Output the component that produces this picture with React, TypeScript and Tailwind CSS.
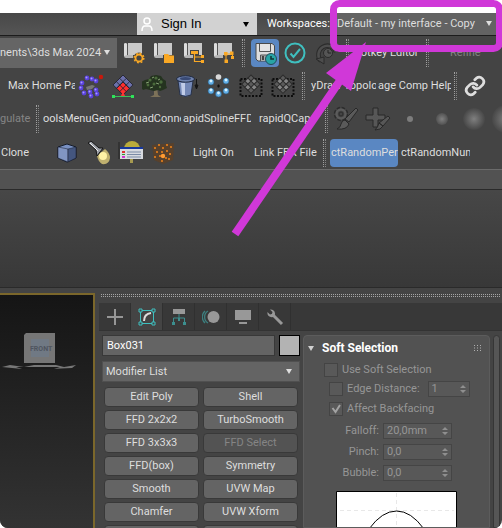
import type { ReactNode } from "react";

const ORANGE = "#f9a825";
const TEAL = "#3fbfbf";

const Separator = () => (
  <div className="flex h-7 w-2 shrink-0 justify-center gap-px">
    <div className="border-l border-dotted border-[#a0a0a0]" />
    <div className="border-l border-dotted border-[#858585]" />
  </div>
);

interface ToolProps {
  label: string;
  className?: string;
  children: ReactNode;
}

const Tool = ({ label, className = "w-8", children }: ToolProps) => (
  <button aria-label={label} className={`flex h-7 shrink-0 items-center justify-center ${className}`}>
    {children}
  </button>
);

interface TextToolProps {
  text: string;
  className: string;
}

const TextTool = ({ text, className }: TextToolProps) => (
  <button className={`h-7 shrink-0 overflow-hidden whitespace-nowrap text-left ${className}`}>{text}</button>
);

const Caret = ({ className = "" }: { className?: string }) => (
  <svg className={`pointer-events-none ${className}`} width="6" height="5" viewBox="0 0 6 5">
    <path d="M0 0h6L3 5z" fill="currentColor" />
  </svg>
);

const ScriptIcon = ({ children }: { children: ReactNode }) => (
  <svg width="22" height="22" viewBox="0 0 22 22">
    <path d="M5 1h14v12H5z" fill="#c9c9c9" />
    <path d="M1 2q0-1 1.500-1t1.500 1v12H1z" fill="#dcdcdc" />
    <path d="M1 14q0 2 2 2h7v-3H4.500z" fill="#b5b5b5" />
    <path d="M4.500 2v11" stroke="#555" />
    {children}
  </svg>
);

const GearScript = () => (
  <ScriptIcon>
    <circle cx="16" cy="16" r="5.500" fill="#444" />
    <circle cx="16" cy="16" r="3.500" fill="none" stroke={ORANGE} strokeWidth="1.800" />
    <circle cx="16" cy="16" r="4.800" fill="none" stroke={ORANGE} strokeWidth="1.500" strokeDasharray="1.900 1.870" />
  </ScriptIcon>
);

const FolderScript = () => (
  <ScriptIcon>
    <path d="M11 12h4l1.500 1.500H21V21H11z" fill={ORANGE} />
  </ScriptIcon>
);

const TreeScript = () => (
  <ScriptIcon>
    <path d="M7 8h9v5H7z" fill="#444" />
    <path d="M8 9h7v3H8zM18 13h3v3h-3zM18 18h3v3h-3z" fill={ORANGE} />
    <path d="M11.500 12v7.500H18M11.500 15H18" fill="none" stroke={ORANGE} strokeWidth="1.200" />
  </ScriptIcon>
);

const NodesScript = () => (
  <ScriptIcon>
    <path d="M11 10h3.500v3.500H11zM17 9.500h3.500V13H17zM11.500 17.500H15V21h-3.500zM18 14h3v3h-3z" fill={ORANGE} />
    <path d="M13 12h6l1 3M13 12v7" fill="none" stroke={ORANGE} />
  </ScriptIcon>
);

const SaveIcon = () => (
  <svg width="24" height="24" viewBox="0 0 24 24">
    <path d="M3 2.500h16l2.500 2V20H5l-2-2z" fill="#ddd" stroke="#4a4a4a" />
    <path d="M6.500 3v7.500h11V3" fill="#e4e4e4" stroke="#555" />
    <path d="M7.500 20v-6h8v6" fill="#aaa" stroke="#555" />
    <path d="M9 15h2v4H9z" fill="#444" />
    <circle cx="18" cy="18" r="5.500" fill="#28a5a5" stroke="#254b5c" />
    <path d="M18 15v3h3" fill="none" stroke="#133" strokeWidth="1.500" />
  </svg>
);

const CheckIcon = () => (
  <svg width="22" height="22" viewBox="0 0 22 22" fill="none" stroke={TEAL} strokeWidth="2">
    <circle cx="11" cy="11" r="9.500" />
    <path d="M6.500 11.500l3 3.500 6.500-8" />
  </svg>
);

const HistoryIcon = () => (
  <svg width="24" height="24" viewBox="0 0 24 24" fill="none">
    <path d="M6 20a9 9 0 1 1 15-9" stroke="#2b2b2b" strokeWidth="4.500" />
    <path d="M6 20a9 9 0 1 1 15-9" stroke="#4d4d4d" strokeWidth="2.500" />
    <path d="M1 18l8-2v7z" fill="#4d4d4d" stroke="#2b2b2b" />
    <circle cx="13" cy="12" r="4.500" fill="#555" stroke="#2b2b2b" />
    <path d="M13 9v3h3" stroke="#222" />
  </svg>
);

const BALLS = [[4, 10], [9, 5], [14, 6], [18, 8], [3, 15], [6, 20], [12, 19], [18, 17], [13, 23], [19, 21]];

const BallsIcon = () => (
  <svg width="26" height="26" viewBox="0 0 26 26">
    <path d="M8 14l6-2 3 1-3 3-5 1z" fill="#777" />
    {BALLS.map(([x, y]) => (
      <g key={`${x}-${y}`}>
        <circle cx={x} cy={y} r="2.400" fill="#5a42dc" />
        <circle cx={x - 0.5} cy={y - 0.5} r="1" fill="#a99bff" />
      </g>
    ))}
    <circle cx="23" cy="4" r="2.200" fill="#c8190c" />
  </svg>
);

const CheckerIcon = () => (
  <svg width="24" height="24" viewBox="0 0 24 24">
    <g transform="translate(12 1) rotate(45)" stroke="#20202c" strokeWidth=".8">
      <path d="M0 0h14v14H0z" fill="#6c70aa" />
      <path d="M5 5h9v9H5z" fill="#ff2e2e" />
      <path d="M0 4.700h14M0 9.400h14M4.700 0v14M9.400 0v14" />
    </g>
    <path d="M2 22.500h20" stroke="#3bbf58" />
    <path d="M1 21h3v3H1zM20 21h3v3h-3z" fill="#2fe35a" />
    <path d="M12 17l2 5h-4z" fill="#f33" />
  </svg>
);

const TreeIcon = () => (
  <svg width="26" height="24" viewBox="0 0 26 24">
    <path d="M12 13h3l1 8 3 2H8l4-2z" fill="#7d7259" />
    <path d="M3 6l4-1 2-3 5-1 5 1 2 3 3 2v4l1 3-4 2-3 1-2-1-4 1-4-1-4-1-3 1-3-4 1-4z" fill="#24331f" />
    <g fill="#4a6a3b">
      <circle cx="8" cy="6" r="1.600" />
      <circle cx="14" cy="4" r="1.600" />
      <circle cx="19" cy="8" r="1.700" />
      <circle cx="6" cy="11" r="1.400" />
      <circle cx="12" cy="10" r="1.500" />
      <circle cx="18" cy="13" r="1.200" />
    </g>
    <path d="M10 4l2-1M16 6l2-1M4 9l3-1M14 9l3 1M8 14l3-1" stroke="#86a274" />
  </svg>
);

const BucketIcon = () => (
  <svg width="24" height="24" viewBox="0 0 24 24">
    <path d="M3 7h15l-2 14q-6 3-11 0z" fill="#7488b6" stroke="#273148" />
    <path d="M6 9l1 12h3V9z" fill="#c2cde8" />
    <ellipse cx="10.500" cy="5" rx="9" ry="3.200" fill="#6f82ad" stroke="#1f2940" />
    <ellipse cx="10.500" cy="4.500" rx="5.500" ry="1.500" fill="#394a75" />
    <path d="M21.500 5v8M20 11l1.500 4 1.500-4z" stroke="#161616" fill="#161616" />
  </svg>
);

const RING = [[5, 8], [20, 7], [5, 17], [20, 17], [12.5, 20]];

const RingIcon = () => (
  <svg width="26" height="26" viewBox="0 0 26 26">
    {RING.map(([x, y]) => (
      <g key={`${x}-${y}`}>
        <circle cx={x} cy={y + 1} r="3" fill="#62aee6" stroke="#2a5a80" strokeWidth=".6" />
        <circle cx={x} cy={y} r="1.400" fill="#d7f2ff" />
      </g>
    ))}
    <circle cx="12.500" cy="4" r="2.800" fill="#d8d8d8" />
    <path d="M12.500 11.500v3M11 13h3" stroke="#111" strokeWidth="1.200" />
  </svg>
);

const FrameIcon = () => (
  <svg width="24" height="24" viewBox="0 0 24 24">
    <path d="M1.500 5h21v17h-21z" fill="none" stroke="#0d0d0d" strokeWidth="2" strokeDasharray="2 1.500" />
    <g transform="translate(12 1) rotate(45)" stroke="#2c2c2c">
      <path d="M0 0h13v13H0z" fill="#5b5b5b" />
      <path d="M4.300 0h4.400v4.300H4.300zM0 4.300h4.300v4.400H0zM8.700 4.300H13v4.400H8.700zM4.300 8.700h4.400V13H4.300z" fill="#858585" />
    </g>
  </svg>
);

const LinkIcon = () => (
  <svg width="22" height="22" viewBox="0 0 24 24" fill="none" stroke="#dedede" strokeWidth="3" strokeLinecap="round">
    <path d="M10 13a5 5 0 0 0 7.500.5l3-3a5 5 0 0 0-7-7l-1.700 1.700" />
    <path d="M14 11a5 5 0 0 0-7.500-.5l-3 3a5 5 0 0 0 7 7l1.700-1.700" />
  </svg>
);

const BrushGearIcon = () => (
  <svg width="26" height="26" viewBox="0 0 26 26">
    <circle cx="8" cy="8" r="5.500" fill="none" stroke="#2c2c2c" strokeWidth="3.500" strokeDasharray="3 1.300" />
    <circle cx="8" cy="8" r="4.500" fill="none" stroke="#5b5b5b" strokeWidth="2.500" />
    <circle cx="8" cy="8" r="2" fill="none" stroke="#2c2c2c" />
    <path d="M23 2l2 2-9 12-4-3z" fill="#5a5a5a" stroke="#282828" />
    <path d="M12 14l4 4q-2 6-12 5 4-2 4-5 1-4 4-4z" fill="#5a5a5a" stroke="#282828" />
  </svg>
);

const BrushPlusIcon = () => (
  <svg width="26" height="26" viewBox="0 0 26 26" fill="#575757" stroke="#282828">
    <path d="M8 2h5v7h7v5h-7v7H8v-7H1V9h7z" />
    <path d="M23 10l2 2-7 8-4-3zM14 17l4 3q-2 4-8 4 3-3 4-7z" />
  </svg>
);

const CubeIcon = () => (
  <svg width="20" height="20" viewBox="0 0 20 20" stroke="#141b2b">
    <path d="M1 4l9-3 9 3v11l-9 4-9-4z" fill="#7890c2" />
    <path d="M1 4l10 2v13l-10-4z" fill="#8195c2" strokeWidth=".5" />
    <path d="M11 6l8-2v11l-8 4z" fill="#44567f" strokeWidth=".5" />
  </svg>
);

const TorchIcon = () => (
  <svg width="26" height="26" viewBox="0 0 26 26">
    <path d="M11 16l8-7q5 4 5 9-1 7-8 6-4-3-5-8z" fill="#e8d47e" opacity=".75" />
    <circle cx="17" cy="16" r="4" fill="#fff2a5" />
    <path d="M2 3l3-2 8 7 4 0-6 8-1-6z" fill="#9da1a8" stroke="#161616" />
    <path d="M4 3l8 8" stroke="#f2f2f2" />
  </svg>
);

const ListLampIcon = () => (
  <svg width="26" height="24" viewBox="0 0 26 24">
    <circle cx="14" cy="8" r="8" fill="#b9ab3c" />
    <path d="M12 17h3v5h-3z" fill="#a69a50" />
    <path d="M2 6h23v12H2z" fill="#d8dbe0" />
    <path d="M2 6h23v2H2z" fill="#17389c" />
    <path d="M9 11h14M9 13.500h14M9 16h14" stroke="#7b8ba5" />
    <path d="M4 10h3v2H4z" fill="#d33" />
    <path d="M4 13h3v1H4z" fill="#393" />
    <path d="M4 15h3v2H4z" fill="#c3c" />
    <path d="M1 1v17" stroke="#222" />
  </svg>
);

const SPARKS = [[5, 7], [9, 4], [13, 7], [17, 4], [21, 6], [7, 11], [12, 11], [17, 10], [20, 13], [5, 16], [10, 15], [16, 17], [12, 20], [19, 18]];

const SparksIcon = () => (
  <svg width="26" height="24" viewBox="0 0 26 24">
    <path d="M2 4l22-2-1 17-10 4-9-4z" fill="#66401c" opacity=".6" />
    {SPARKS.map(([x, y]) => (
      <circle key={`${x}-${y}`} cx={x} cy={y} r="1.100" fill="#e8801c" />
    ))}
    <circle cx="13" cy="15" r="2.200" fill="#ff9b32" />
  </svg>
);

const MODIFIERS = [
  "Edit Poly", "Shell", "FFD 2x2x2", "TurboSmooth", "FFD 3x3x3", "FFD Select", "FFD(box)",
  "Symmetry", "Smooth", "UVW Map", "Chamfer", "UVW Xform", "", "",
];

const PANEL_TABS = [
  {
    label: "Create",
    icon: <path d="M8 0v16M0 8h16" stroke="#969696" strokeWidth="2" />,
  },
  {
    label: "Modify",
    icon: (
      <>
        <path d="M1.500 1.500h13v13h-13z" fill="none" stroke={TEAL} />
        <path d="M0 0h3v3H0zM13 0h3v3h-3zM0 13h3v3H0zM13 13h3v3h-3z" fill="#444" stroke={TEAL} />
        <path d="M5 12q0-7 7-8" fill="none" stroke="#dedede" strokeWidth="2" />
      </>
    ),
  },
  {
    label: "Hierarchy",
    icon: (
      <>
        <path d="M2 0h12v5H2z" fill="#989898" />
        <path d="M8 5v4M2.500 13V9h11v4" fill="none" stroke="#3c8f8f" />
        <path d="M1 13h3v3H1zM7 9h2v3H7zM12 13h3v3h-3z" fill="#3c8f8f" />
      </>
    ),
  },
  {
    label: "Motion",
    icon: (
      <>
        <circle cx="10.500" cy="8" r="6" fill="#989898" />
        <path d="M5 2a7 7 0 0 0 0 12M2 2a8 8 0 0 0 0 12" fill="none" stroke="#3c8080" strokeWidth="1.300" />
      </>
    ),
  },
  {
    label: "Display",
    icon: <path d="M0 1h16v10H0zM4 13h8v2H4z" fill="#989898" />,
  },
  {
    label: "Utilities",
    icon: (
      <>
        <path d="M5 5l10 10" stroke="#989898" strokeWidth="3" />
        <path d="M3 .5l2.500 2.500-.5 2-2 .5L.5 3Q0 6 2.500 7.500T7 7.500Q9 5 7.500 2.500T3 .5z" fill="#989898" />
      </>
    ),
  },
];

interface SpinnerProps {
  id: string;
  label: string;
  value: string;
}

const SpinArrows = () => (
  <svg className="pointer-events-none absolute right-1 top-1" width="6" height="8" viewBox="0 0 6 8">
    <path d="M0 3h6L3 0zM0 5h6L3 8z" fill="#8f8f8f" />
  </svg>
);

const SpinnerRow = ({ id, label, value }: SpinnerProps) => (
  <div className="flex h-[21px] items-center gap-1">
    <label htmlFor={id} className="w-[68px] text-right">{label}</label>
    <div className="relative">
      <input id={id} defaultValue={value} className="block h-4 w-[69px] border border-[#454545] bg-[#585858] px-[3px]" />
      <SpinArrows />
    </div>
  </div>
);

const checkboxStyle = "size-[14px] shrink-0 appearance-none border border-[#444] bg-[#595959]";

const SoftSelection = () => (
  <section className="min-w-0 grow overflow-hidden rounded-t border border-[#5c5c5c] bg-[#525252] text-[#969696]">
    <h2 className="flex h-6 items-center gap-2 pl-1 pr-2 text-xs font-bold text-white">
      <Caret className="text-[#d0d0d0]" />
      <span className="grow">Soft Selection</span>
      <svg width="7" height="6" viewBox="0 0 7 6">
        <path d="M0 .5h7M0 3h7M0 5.500h7" stroke="#b0b0b0" strokeDasharray="1 2" />
      </svg>
    </h2>
    <div className="flex h-5 items-center gap-1 pl-5">
      <input id="soft" type="checkbox" className={checkboxStyle} />
      <label htmlFor="soft">Use Soft Selection</label>
    </div>
    <div className="flex h-[18px] items-center gap-1 pl-[25px]">
      <input id="edge" type="checkbox" className={checkboxStyle} />
      <label htmlFor="edge">Edge Distance:</label>
      <div className="relative ml-1">
        <input aria-label="Edge distance value" defaultValue="1" className="block h-4 w-[42px] border border-[#454545] bg-[#585858] px-[3px]" />
        <SpinArrows />
      </div>
    </div>
    <div className="flex h-[22px] items-center gap-1 pl-[25px]">
      <span className="relative flex">
        <input id="backfacing" type="checkbox" defaultChecked className={checkboxStyle} />
        <svg className="pointer-events-none absolute left-0.5 top-0.5" width="10" height="10" viewBox="0 0 10 10">
          <path d="M1.500 4l3 4L9 1" fill="none" stroke="#a3a3a3" strokeWidth="2" />
        </svg>
      </span>
      <label htmlFor="backfacing">Affect Backfacing</label>
    </div>
    <div className="pl-[7px]">
      <SpinnerRow id="falloff" label="Falloff:" value="20,0mm" />
      <SpinnerRow id="pinch" label="Pinch:" value="0,0" />
      <SpinnerRow id="bubble" label="Bubble:" value="0,0" />
    </div>
    <svg className="ml-8 mt-2" width="121" height="60" viewBox="0 0 121 60">
      <path d="M.5 .5h120v60H.5z" fill="#fff" stroke="#000" />
      <path d="M4 19.500h114M60.500 2v56" stroke="#e8e8e8" strokeDasharray="4 3" />
      <path d="M16 58Q25 48 33 38Q46 20 60.500 20T88 38Q96 48 105 58" fill="none" stroke="#000" />
    </svg>
  </section>
);

export default function App() {
  return (
    <div className="relative h-screen overflow-hidden bg-white pt-[13px] font-[Roboto,'Noto_Sans',sans-serif] text-[11px] leading-4 text-[#dedede]">
      <div className="flex h-full flex-col overflow-hidden rounded-b-lg bg-[#444]">
        <header className="flex h-[23px] shrink-0 items-stretch justify-end border-b border-[#1c1c1c] bg-linear-to-b from-[#484848] to-[#555]">
          <button className="flex w-[120px] items-center gap-2 bg-[#d2d2d2] pl-1 pr-2 font-['Liberation_Sans',sans-serif] text-[13px] text-black">
            <svg width="12" height="15" viewBox="0 0 12 15" fill="none" stroke="#fff" strokeWidth="1.500">
              <circle cx="6" cy="4" r="3" />
              <path d="M1 14q0-5 3-5h4q3 0 3 5" />
            </svg>
            <span className="grow text-left">Sign In</span>
            <Caret />
          </button>
          <label htmlFor="workspace" className="w-[74px] self-center pl-2.5 text-white">Workspaces:</label>
          <div className="relative w-[171px] bg-[#636363]">
            <select id="workspace" className="h-full w-full appearance-none px-1.5">
              <option>Default - my interface - Copy</option>
            </select>
            <Caret className="absolute right-2.5 top-2" />
          </div>
        </header>

        <div className="flex h-[34px] shrink-0 items-center overflow-hidden">
          <div className="relative h-[30px] w-[117px] shrink-0 overflow-hidden bg-[#656565]">
            <select aria-label="Project folder" className="h-full w-full appearance-none">
              <option>nents\3ds Max 2024</option>
            </select>
            <Caret className="absolute right-[7px] top-3" />
          </div>
          <div className="flex shrink-0 pl-0.5">
            <Tool label="Script settings" className="w-[30px]"><GearScript /></Tool>
            <Tool label="Open script" className="w-[30px]"><FolderScript /></Tool>
            <Tool label="Script tree" className="w-[30px]"><TreeScript /></Tool>
            <Tool label="Script nodes" className="w-[30px]"><NodesScript /></Tool>
          </div>
          <Separator />
          <div className="ml-1 flex shrink-0 items-center gap-0.5">
            <Tool label="Autosave" className="w-7 rounded-sm bg-[#5a87c2]"><SaveIcon /></Tool>
            <Tool label="Confirm" className="w-7"><CheckIcon /></Tool>
            <Tool label="History"><HistoryIcon /></Tool>
          </div>
          <Separator />
          <TextTool text="Hotkey Editor" className="w-[72px] pl-0.5" />
          <Separator />
          <TextTool text="Refine" className="w-14 pl-[19px] text-[#858585]" />
        </div>

        <div className="flex h-8 shrink-0 items-center overflow-hidden">
          <TextTool text="Max Home Pa" className="w-[75px] pl-2" />
          <Tool label="Scatter"><BallsIcon /></Tool>
          <Tool label="Checker"><CheckerIcon /></Tool>
          <Tool label="Tree"><TreeIcon /></Tool>
          <Tool label="Bucket"><BucketIcon /></Tool>
          <Tool label="Radial array"><RingIcon /></Tool>
          <Tool label="Tile selection"><FrameIcon /></Tool>
          <Tool label="Tile region"><FrameIcon /></Tool>
          <Separator />
          <TextTool text="yDraw Topolo" className="w-[69px] pl-1" />
          <TextTool text="age Comp Help" className="w-[75px] pl-0.5" />
          <Separator />
          <Tool label="Link"><LinkIcon /></Tool>
        </div>

        <div className="flex h-[34px] shrink-0 items-center overflow-hidden">
          <TextTool text="gulate" className="w-[33px] text-[#858585]" />
          <Separator />
          <TextTool text="oolsMenuGene" className="ml-0.5 w-[68px]" />
          <TextTool text="pidQuadConne" className="ml-0.5 w-[68px]" />
          <TextTool text="apidSplineFFD" className="ml-0.5 w-[68px]" />
          <TextTool text="rapidQCap" className="w-[71px] pl-2" />
          <Separator />
          <Tool label="Brush settings"><BrushGearIcon /></Tool>
          <Tool label="Add brush"><BrushPlusIcon /></Tool>
          <Tool label="Small brush"><span className="size-1.5 rounded-full bg-[#7d7d7d]" /></Tool>
          <Tool label="Medium brush"><span className="size-3 rounded-full bg-radial from-[#808080] to-[#4c4c4c] to-80%" /></Tool>
          <Tool label="Large brush"><span className="size-[22px] rounded-full bg-radial from-[#808080] to-[#444] to-75%" /></Tool>
          <Tool label="Huge brush"><span className="size-7 rounded-full bg-radial from-[#808080] to-[#444] to-75%" /></Tool>
        </div>

        <div className="flex h-[33px] shrink-0 items-center overflow-hidden">
          <TextTool text="Clone" className="w-[51px] pl-px" />
          <Tool label="Box"><CubeIcon /></Tool>
          <Tool label="Spotlight"><TorchIcon /></Tool>
          <Tool label="Light lister"><ListLampIcon /></Tool>
          <Tool label="Particles"><SparksIcon /></Tool>
          <TextTool text="Light On" className="w-[70px] pl-3.5" />
          <TextTool text="Link FBX File" className="w-[71px] pl-[5px]" />
          <Separator />
          <TextTool text="ctRandomPerc" className="ml-0.5 w-[68px] rounded bg-[#5a87c2] pl-px" />
          <TextTool text="ctRandomNum" className="w-[72px] pl-[3px]" />
        </div>

        <div className="h-[21px] shrink-0 border-b border-t border-b-[#2a2a2a] border-t-[#6b6b6b] bg-[#525252]" />
        <div className="h-[98px] shrink-0 border-b border-[#2a2a2a] bg-linear-to-b from-[#474747] to-[#383838]" />

        <main className="flex min-h-0 grow pt-[5px]">
          <div className="w-[95px] shrink-0 border-r-2 border-t-2 border-[#7b672b] bg-linear-to-b from-[#151515] to-[#333]">
            <svg className="mt-8 w-full" height="48" viewBox="0 0 93 48">
              <path d="M2 40l8-2 14 2 10-2h22l8 2 12-2-4 3-22 1-14-1-14 1z" fill="#777" />
              <path d="M16 40h44l-6 2H22z" fill="#1b1b1b" />
              <path d="M24 8l2-2h29v30H24z" fill="#767676" />
              <path d="M31 12h18v18H31z" fill="#707984" />
              <text x="30" y="24" fontSize="7" fontWeight="bold" fill="#4f555f">FRONT</text>
            </svg>
          </div>

          <aside className="flex min-w-0 grow flex-col pl-1 pt-px">
            <div className="mx-0.5 h-[3px] shrink-0 border-b border-t border-dotted border-[#a5a5a5]" />
            <nav className="mt-1.5 flex h-7 shrink-0 border-b border-[#333] bg-[#383838]">
              {PANEL_TABS.map(({ label, icon }) => (
                <button
                  key={label}
                  aria-label={label}
                  className={`flex w-8 items-center justify-center border-r border-[#303030] ${label === "Modify" ? "bg-[#444]" : ""}`}
                >
                  <svg width="18" height="18" viewBox="-1 -1 18 18">{icon}</svg>
                </button>
              ))}
            </nav>

            <div className="flex min-h-0 grow gap-[3px] pt-1">
              <div className="w-[201px] shrink-0 pl-[3px]">
                <div className="flex gap-1">
                  <input aria-label="Object name" defaultValue="Box031" className="h-[21px] min-w-0 grow border border-[#383838] bg-[#646464] px-1 text-white" />
                  <button aria-label="Object color" className="size-[21px] shrink-0 border border-black bg-[#b3b3b3]" />
                </div>
                <div className="relative mt-[5px]">
                  <select aria-label="Modifier List" className="block h-[21px] w-full appearance-none border border-[#505050] bg-[#646464] px-[3px]">
                    <option>Modifier List</option>
                  </select>
                  <Caret className="absolute right-2 top-2" />
                </div>
                <div className="mt-[5px] grid grid-cols-2 gap-x-1 gap-y-[3px] px-0.5">
                  {MODIFIERS.map((name, index) => (
                    <button
                      key={index}
                      disabled={name === "FFD Select"}
                      className="h-5 whitespace-nowrap rounded border border-[#393939] bg-[#646464] leading-[18px] disabled:bg-[#535353] disabled:text-[#858585]"
                    >
                      {name}
                    </button>
                  ))}
                </div>
              </div>
              <SoftSelection />
              <div className="mr-0.5 w-[7px] shrink-0 rounded-t border border-[#363636] bg-[#565656]" />
            </div>
          </aside>
        </main>
      </div>

      {/* callout pointing at the workspace selector */}
      <svg className="pointer-events-none absolute right-0 top-0" width="272" height="240" viewBox="230 0 272 240">
        <rect x="333.500" y="3.500" width="166" height="45" rx="6" fill="none" stroke="#d038d8" strokeWidth="7" />
        <path d="M235 234L350 66" stroke="#d038d8" strokeWidth="8" />
        <path d="M366 42l-40 31 25 18z" fill="#d038d8" />
      </svg>
    </div>
  );
}
